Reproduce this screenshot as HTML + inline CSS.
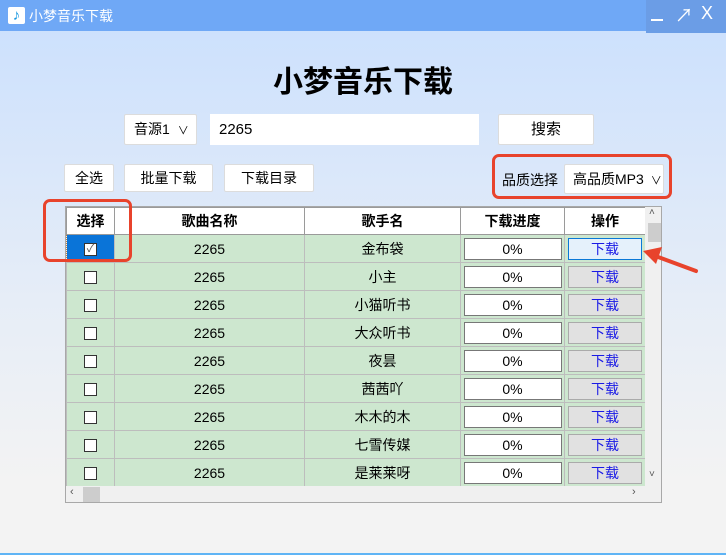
<!DOCTYPE html>
<html><head><meta charset="utf-8"><style>
*{margin:0;padding:0;box-sizing:border-box}
body{width:726px;height:555px;overflow:hidden;font-family:"Liberation Sans","Noto Sans CJK SC",sans-serif;font-size:14px;color:#000;position:relative;background:linear-gradient(#cde1fd 31px,#e6edf7 300px,#f3f3f3 480px);}
.a{position:absolute}
.tb{left:0;top:0;width:726px;height:31px;background:#6fa8f6;color:#fff}
.btn{position:absolute;background:#fff;border:1px solid #dcdcdc;border-radius:2px;text-align:center;font-size:14px}
.red{position:absolute;border:3px solid #e8432c;border-radius:7px}
table{border-collapse:collapse;table-layout:fixed}
td,th{border:1px solid #bdbdbd;text-align:center;height:28px;font-size:14px;font-weight:normal}
th{background:#fff;border-color:#9a9a9a;font-weight:bold;height:27px}
tr.d td{background:#cde7cf}
.cb{display:inline-block;width:13px;height:13px;border:1px solid #333;background:#fff;vertical-align:middle}
.pg{display:block;margin:0 auto;width:98px;height:22px;border:1px solid #777;background:#fff;line-height:20px}
.dl{display:block;margin:0 auto;width:74px;height:22px;border:1px solid #aaa;background:#e1e1e1;color:#1a1ae6;line-height:20px}
</style></head><body>
<div class="a tb">
 <div class="a" style="left:8px;top:7px;width:17px;height:17px;background:#fff;border-radius:2px;color:#1496e0;font-size:15px;line-height:17px;text-align:center;font-weight:bold">♪</div>
 <div class="a" style="left:29px;top:6px;font-size:14px">小梦音乐下载</div>
 <div class="a" style="left:646px;top:0;width:80px;height:33px;background:#6b9de6"></div>
 <div class="a" style="left:651px;top:19px;width:12px;height:2px;background:#fff"></div>
 <div class="a" style="left:675px;top:2px;font-size:18px">↗</div>
 <div class="a" style="left:701px;top:3px;font-size:18px">X</div>
</div>
<div class="a" style="left:0;top:57px;width:726px;text-align:center;font-size:30px;font-weight:bold">小梦音乐下载</div>
<div class="btn" style="left:124px;top:114px;width:73px;height:31px;line-height:29px;text-align:left;padding-left:9px">音源1 <span style="font-size:11px;margin-left:4px">∨</span></div>
<div class="a" style="left:210px;top:114px;width:269px;height:31px;background:#fff;line-height:31px;padding-left:9px;font-size:15px">2265</div>
<div class="btn" style="left:498px;top:114px;width:96px;height:31px;line-height:29px;font-size:15px">搜索</div>
<div class="btn" style="left:64px;top:164px;width:50px;height:28px;line-height:26px">全选</div>
<div class="btn" style="left:124px;top:164px;width:89px;height:28px;line-height:26px">批量下载</div>
<div class="btn" style="left:224px;top:164px;width:90px;height:28px;line-height:26px">下载目录</div>
<div class="a" style="left:502px;top:170px">品质选择</div>
<div class="btn" style="left:564px;top:164px;width:100px;height:30px;line-height:28px;text-align:left;padding-left:8px">高品质MP3 <span style="font-size:11px;margin-left:3px">∨</span></div>
<div class="red" style="left:492px;top:154px;width:180px;height:45px"></div>
<div class="a" style="left:65px;top:206px;width:597px;height:297px;border:1px solid #a8a8a8;background:#f0f0f0;overflow:hidden">
<table style="width:579px">
<colgroup><col style="width:48px"><col style="width:190px"><col style="width:156px"><col style="width:104px"><col style="width:81px"></colgroup>
<tr><th>选择</th><th>歌曲名称</th><th>歌手名</th><th>下载进度</th><th>操作</th></tr>
<tr class="d"><td style="background:#0a74d8;border:1px dotted #c08040"><span class="cb" style="font-size:11px;line-height:11px;color:#555">✓</span></td><td>2265</td><td>金布袋</td><td><span class="pg">0%</span></td><td><span class="dl" style="background:#e5f1fb;border-color:#0a78d7">下载</span></td></tr>
<tr class="d"><td><span class="cb"></span></td><td>2265</td><td>小主</td><td><span class="pg">0%</span></td><td><span class="dl">下载</span></td></tr>
<tr class="d"><td><span class="cb"></span></td><td>2265</td><td>小猫听书</td><td><span class="pg">0%</span></td><td><span class="dl">下载</span></td></tr>
<tr class="d"><td><span class="cb"></span></td><td>2265</td><td>大众听书</td><td><span class="pg">0%</span></td><td><span class="dl">下载</span></td></tr>
<tr class="d"><td><span class="cb"></span></td><td>2265</td><td>夜昙</td><td><span class="pg">0%</span></td><td><span class="dl">下载</span></td></tr>
<tr class="d"><td><span class="cb"></span></td><td>2265</td><td>茜茜吖</td><td><span class="pg">0%</span></td><td><span class="dl">下载</span></td></tr>
<tr class="d"><td><span class="cb"></span></td><td>2265</td><td>木木的木</td><td><span class="pg">0%</span></td><td><span class="dl">下载</span></td></tr>
<tr class="d"><td><span class="cb"></span></td><td>2265</td><td>七雪传媒</td><td><span class="pg">0%</span></td><td><span class="dl">下载</span></td></tr>
<tr class="d"><td><span class="cb"></span></td><td>2265</td><td>是莱莱呀</td><td><span class="pg">0%</span></td><td><span class="dl">下载</span></td></tr>
</table>
<div class="a" style="left:579px;top:0;width:17px;height:279px;background:#f0f0f0"><div class="a" style="left:3px;top:16px;width:13px;height:19px;background:#cdcdcd"></div><div class="a" style="left:4px;top:0;font-size:10px;color:#555">˄</div><div class="a" style="left:4px;top:262px;font-size:10px;color:#555">˅</div></div>
<div class="a" style="left:0;top:279px;width:596px;height:17px;background:#f0f0f0"><div class="a" style="left:17px;top:1px;width:17px;height:15px;background:#cdcdcd"></div><div class="a" style="left:4px;top:0;font-size:11px;color:#555">‹</div><div class="a" style="left:566px;top:0;font-size:11px;color:#555">›</div></div>
</div>
<div class="red" style="left:43px;top:199px;width:89px;height:63px"></div>
<svg class="a" style="left:640px;top:240px" width="60" height="40"><line x1="56" y1="31" x2="10" y2="14" stroke="#e8432c" stroke-width="4" stroke-linecap="round"/><polygon points="3,11 22,7 16,24" fill="#e8432c"/></svg>
<div class="a" style="left:0;top:553px;width:726px;height:2px;background:#5fb4f5"></div>
</body></html>
